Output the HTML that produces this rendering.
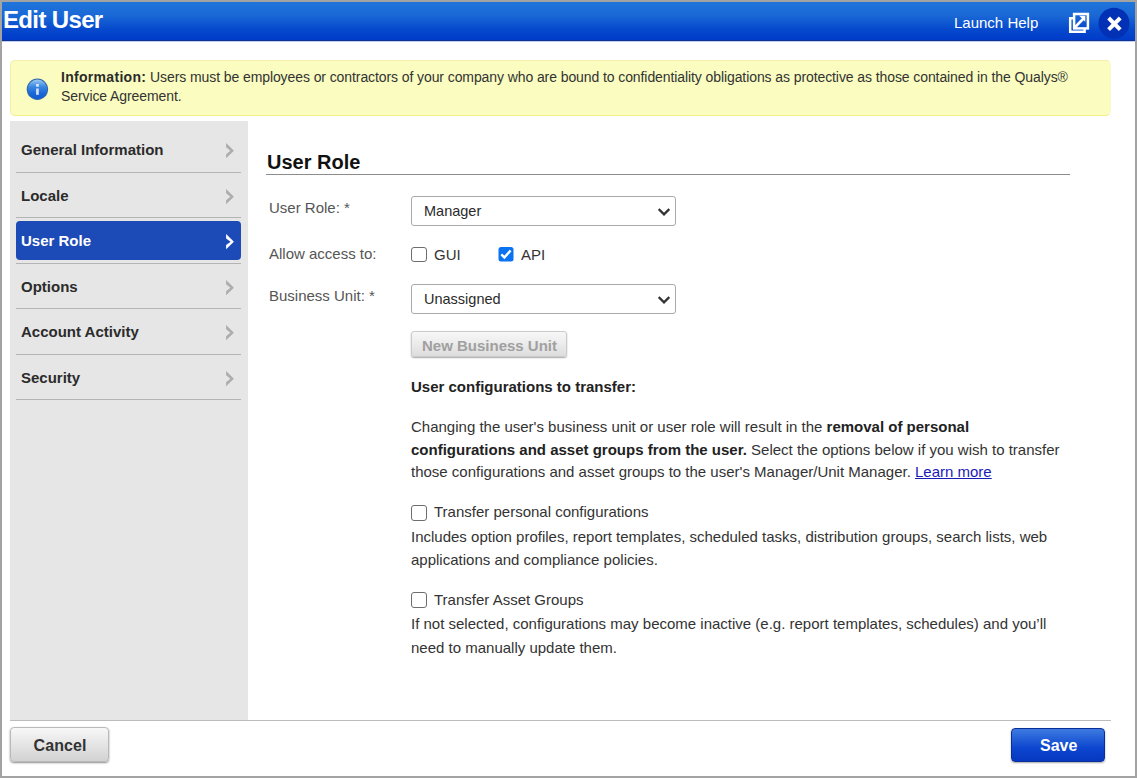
<!DOCTYPE html>
<html><head><meta charset="utf-8">
<style>
*{box-sizing:border-box;margin:0;padding:0}
html,body{width:1137px;height:778px;overflow:hidden;background:#fff}
body{font-family:"Liberation Sans",sans-serif;color:#333;position:relative}
.abs{position:absolute}
#frame{position:absolute;left:0;top:0;width:1137px;height:778px;border-style:solid;border-color:#a3a3a3;border-width:2px 2px 2px 2px}
#hdr{position:absolute;left:2px;top:2px;width:1133px;height:38px;background:linear-gradient(#1f75da,#1a68d6 35%,#0549cd 72%,#003bc9)}
#hdrdark{position:absolute;left:2px;top:40px;width:1133px;height:1px;background:#123290}
#hdrline{position:absolute;left:2px;top:41px;width:1133px;height:1px;background:#bcd0f4}
#title{position:absolute;left:3px;top:5px;font-size:24px;font-weight:bold;color:#fff;line-height:30px;letter-spacing:-0.65px}
#help{position:absolute;left:954px;top:14px;font-size:15px;color:#fff;line-height:18px}
#info{position:absolute;left:10px;top:60px;width:1101px;height:56px;background:#fafcc0;border:1px solid #f4efa8;border-bottom-color:#f2ee86;border-right-color:#f8f8d4;border-radius:5px}
#infotxt{position:absolute;left:61px;top:68px;font-size:14px;line-height:19px;color:#333;width:1045px;letter-spacing:-0.09px}
#nav{position:absolute;left:10px;top:121px;width:238px;height:599px;background:#e6e6e6}
.ni{position:absolute;left:21px;font-size:15px;font-weight:bold;color:#2b2b2b;line-height:18px}
.nl{position:absolute;left:16px;width:225px;height:1px;background:#b4b4b4}
#sel{position:absolute;left:16px;top:221px;width:225px;height:39px;background:#1c4ab6;border-radius:4px}
.chev{position:absolute;left:224px;width:12px;height:16px}
.lbl{position:absolute;left:269px;font-size:15px;color:#555;line-height:18px;margin-top:1px}
.select{position:absolute;left:411px;width:265px;height:30px;border:1px solid #a9a9a9;border-radius:3px;background:#fff}
.seltxt{position:absolute;left:12px;top:5.6px;font-size:14.5px;color:#2a2a2a;line-height:17px}
.cb{position:absolute;width:15.6px;height:15.6px;border:1.6px solid #6e6e6e;border-radius:3px;background:#fff}
.cbl{position:absolute;font-size:15px;color:#333;line-height:18px}
.p{position:absolute;left:411px;font-size:15px;line-height:22.5px;color:#333}
</style></head><body>
<div id="frame"></div>
<div id="hdr"></div><div id="hdrdark"></div>
<div id="hdrline"></div>
<div id="title">Edit User</div>
<div id="help">Launch Help</div>
<svg class="abs" style="left:1066px;top:10px" width="26" height="26" viewBox="0 0 26 26">
  <path d="M7 8.3 H4.2 V21.7 H18.6 V19" fill="none" stroke="#fff" stroke-width="2.5"/>
  <rect x="8.1" y="4.0" width="13.8" height="14.4" fill="none" stroke="#fff" stroke-width="2.5"/>
  <path d="M9.2 17 L17.5 8.5" stroke="#fff" stroke-width="2.6"/>
  <path d="M13.2 5.8 H19.3 V11.8 Z" fill="#fff"/>
</svg>
<svg class="abs" style="left:1098px;top:7px" width="32" height="32" viewBox="0 0 32 32">
  <circle cx="16" cy="16.3" r="15.5" fill="#0331b6"/>
  <path d="M10.6 11 L22.2 22.6 M22.2 11 L10.6 22.6" stroke="#fff" stroke-width="4" stroke-linecap="butt"/>
</svg>

<div id="info"></div>
<svg class="abs" style="left:26px;top:78px" width="23" height="23" viewBox="0 0 23 23">
  <defs><linearGradient id="ig" x1="0" y1="0" x2="0" y2="1"><stop offset="0" stop-color="#9ccaf2"/><stop offset="0.35" stop-color="#3d8ae2"/><stop offset="0.7" stop-color="#1a68d8"/><stop offset="1" stop-color="#0f5ad6"/></linearGradient></defs>
  <circle cx="11.4" cy="11.3" r="10.7" fill="#3466aa"/>
  <circle cx="11.4" cy="11.3" r="9.7" fill="url(#ig)"/>
  <rect x="10.1" y="6" width="2.7" height="2.7" fill="#dde6f8"/>
  <rect x="10.1" y="10.5" width="2.7" height="6.3" fill="#d6def4"/>
</svg>
<div id="infotxt"><b style="color:#2b2b2b;letter-spacing:0.3px">Information:</b> Users must be employees or contractors of your company who are bound to confidentiality obligations as protective as those contained in the Qualys® Service Agreement.</div>

<div id="nav"></div>
<div class="ni" style="top:141px">General Information</div>
<div class="nl" style="top:172px"></div>
<div class="ni" style="top:187px">Locale</div>
<div class="nl" style="top:217px"></div>
<div id="sel"></div>
<div class="ni" style="top:232px;color:#fff">User Role</div>
<div class="nl" style="top:263px"></div>
<div class="ni" style="top:278px">Options</div>
<div class="nl" style="top:308px"></div>
<div class="ni" style="top:323px">Account Activity</div>
<div class="nl" style="top:354px"></div>
<div class="ni" style="top:369px">Security</div>
<div class="nl" style="top:399px"></div>

<svg class="chev" style="top:143.2px" viewBox="0 0 12 16"><path d="M2.1 0 L9.9 7.65 L2.1 15.3 L2.1 11.16 L6.33 7.65 L2.1 4.14 Z" fill="#adadad"/></svg>
<svg class="chev" style="top:188.7px" viewBox="0 0 12 16"><path d="M2.1 0 L9.9 7.65 L2.1 15.3 L2.1 11.16 L6.33 7.65 L2.1 4.14 Z" fill="#adadad"/></svg>
<svg class="chev" style="top:234.3px" viewBox="0 0 12 16"><path d="M2.1 0 L9.9 7.65 L2.1 15.3 L2.1 10.88 L6.61 7.65 L2.1 4.42 Z" fill="#fff"/></svg>
<svg class="chev" style="top:279.8px" viewBox="0 0 12 16"><path d="M2.1 0 L9.9 7.65 L2.1 15.3 L2.1 11.16 L6.33 7.65 L2.1 4.14 Z" fill="#adadad"/></svg>
<svg class="chev" style="top:325.3px" viewBox="0 0 12 16"><path d="M2.1 0 L9.9 7.65 L2.1 15.3 L2.1 11.16 L6.33 7.65 L2.1 4.14 Z" fill="#adadad"/></svg>
<svg class="chev" style="top:370.8px" viewBox="0 0 12 16"><path d="M2.1 0 L9.9 7.65 L2.1 15.3 L2.1 11.16 L6.33 7.65 L2.1 4.14 Z" fill="#adadad"/></svg>

<div class="abs" style="left:267px;top:151px;font-size:20px;font-weight:bold;color:#111;line-height:23px">User Role</div>
<div class="abs" style="left:266px;top:174px;width:804px;height:1px;background:#8c8c8c"></div>

<div class="lbl" style="top:198px">User Role: *</div>
<div class="select" style="top:196px"><span class="seltxt">Manager</span>
<svg class="abs" style="left:246px;top:11px" width="12" height="8" viewBox="0 0 12 8"><path d="M0.7 1 L6 6.3 L11.3 1" fill="none" stroke="#333" stroke-width="2.3"/></svg></div>

<div class="lbl" style="top:243.5px">Allow access to:</div>
<div class="cb" style="left:411.2px;top:246.6px"></div>
<div class="cbl" style="left:434px;top:246px">GUI</div>
<svg class="abs" style="left:498px;top:247px" width="16" height="15" viewBox="0 0 16 15"><rect x="0.5" y="0" width="15" height="14.6" rx="2.5" fill="#0b72f2"/><path d="M3.3 7.4 L6.4 10.4 L12.6 3.5" fill="none" stroke="#fff" stroke-width="2.4"/></svg>
<div class="cbl" style="left:521px;top:246px">API</div>

<div class="lbl" style="top:286px">Business Unit: *</div>
<div class="select" style="top:284px"><span class="seltxt">Unassigned</span>
<svg class="abs" style="left:246px;top:11px" width="12" height="8" viewBox="0 0 12 8"><path d="M0.7 1 L6 6.3 L11.3 1" fill="none" stroke="#333" stroke-width="2.3"/></svg></div>

<div class="abs" style="left:411px;top:331px;width:156px;height:26px;border:1px solid #cbcbcb;border-radius:3px;background:linear-gradient(#f7f7f7,#eeeeee 40%,#dddddd);box-shadow:0 1px 1.5px rgba(0,0,0,0.35)"></div>
<div class="abs" style="left:422px;top:337px;font-size:15px;font-weight:bold;color:#a0a0a0;line-height:17px">New Business Unit</div>

<div class="p" style="top:375.6px;font-weight:bold;color:#222">User configurations to transfer:</div>
<div class="p" style="top:416px;width:660px">Changing the user's business unit or user role will result in the <b style="color:#222">removal of personal<br>configurations and asset groups from the user.</b> Select the options below if you wish to transfer<br>those configurations and asset groups to the user's Manager/Unit Manager. <span style="color:#1a1ab8;text-decoration:underline">Learn more</span></div>

<div class="cb" style="left:411.2px;top:505.2px"></div>
<div class="cbl" style="left:434px;top:503px">Transfer personal configurations</div>
<div class="p" style="top:525px;line-height:23px">Includes option profiles, report templates, scheduled tasks, distribution groups, search lists, web<br>applications and compliance policies.</div>

<div class="cb" style="left:411.2px;top:592.4px"></div>
<div class="cbl" style="left:434px;top:591px">Transfer Asset Groups</div>
<div class="p" style="top:611.5px;line-height:24px">If not selected, configurations may become inactive (e.g. report templates, schedules) and you’ll<br>need to manually update them.</div>

<div class="abs" style="left:10px;top:720px;width:1101px;height:1px;background:#bcbcbc"></div>
<div class="abs" style="left:10px;top:727px;width:99px;height:35px;border:1px solid #b9b9b9;border-radius:4px;background:linear-gradient(#f8f8f8,#ececec 30%,#d2d2d2);box-shadow:0 1px 2px rgba(0,0,0,0.45)"></div>
<div class="abs" style="left:33.5px;top:737px;font-size:16px;font-weight:bold;color:#333;letter-spacing:0.1px;line-height:18px">Cancel</div>
<div class="abs" style="left:1011px;top:728px;width:94px;height:34px;border:1px solid #0a2f9a;border-radius:4px;background:linear-gradient(#3d7be0,#0c45cf 60%,#0638c0);box-shadow:0 1px 2px rgba(0,0,0,0.35)"></div>
<div class="abs" style="left:1040px;top:737px;font-size:16px;font-weight:bold;color:#fff;line-height:18px">Save</div>
</body></html>
